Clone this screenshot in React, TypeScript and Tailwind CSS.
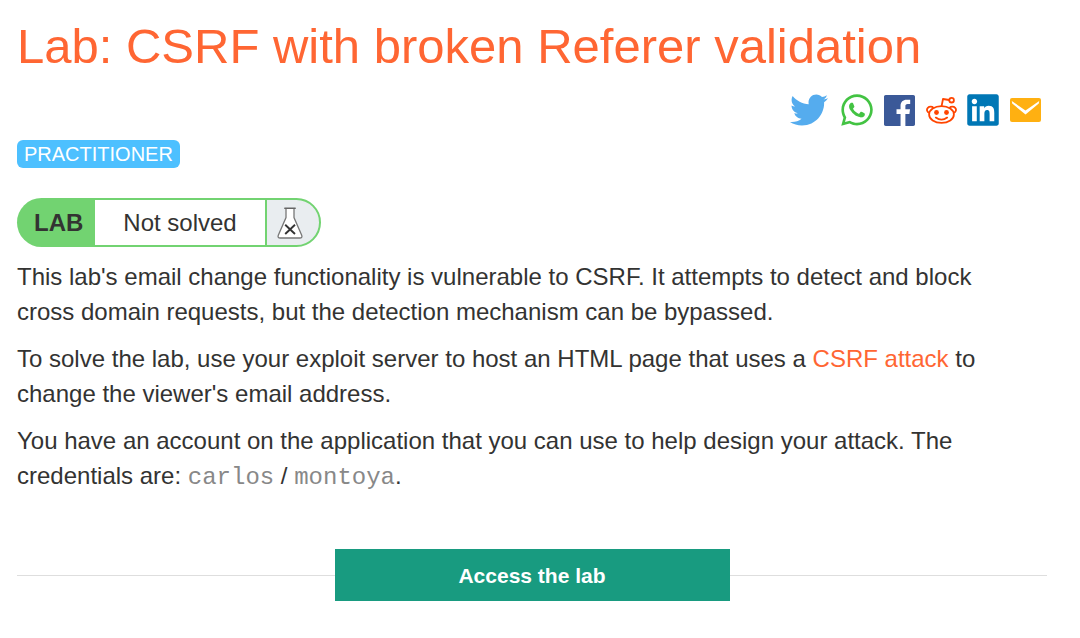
import { FaLinkedin, FaTwitter, FaWhatsapp } from "react-icons/fa";
import type { ReactNode } from "react";

function FacebookIcon() {
  return (
    <svg viewBox="0 0 24 24" className="size-[31px] shrink-0 text-[#3b5998]" fill="currentColor" aria-hidden="true">
      <path d="M22.676 0H1.324C.593 0 0 .593 0 1.324v21.352C0 23.408.593 24 1.324 24h11.494v-9.294H9.689v-3.621h3.129V8.41c0-3.099 1.894-4.785 4.659-4.785 1.325 0 2.464.097 2.796.141v3.24h-1.921c-1.5 0-1.792.721-1.792 1.771v2.311h3.584l-.465 3.63H16.56V24h6.115c.733 0 1.325-.592 1.325-1.324V1.324C24 .593 23.408 0 22.676 0" />
    </svg>
  );
}

function RedditIcon() {
  return (
    <svg viewBox="0 0 31 27" className="h-[27px] w-[31px] shrink-0" fill="none" stroke="#ff4500" strokeWidth="1.8" aria-hidden="true">
      <ellipse cx="15.5" cy="17.5" rx="12.4" ry="8.4" />
      <path d="M3.6 16C.9 15.2.3 12.4 1.8 10.8 3.3 9.2 6 9.2 7.6 10.8M27.4 16c2.7-.8 3.3-3.6 1.8-5.2-1.5-1.6-4.2-1.6-5.8 0" />
      <path d="M15.6 9.2l1.4-7.2 6.2 1" strokeLinejoin="round" />
      <circle cx="25.6" cy="3.2" r="2.3" />
      <path d="M9.8 20.6c3.4 2.5 8 2.5 11.4 0" strokeLinecap="round" />
      <circle cx="10.5" cy="15.5" r="2.4" fill="#ff4500" stroke="none" />
      <circle cx="20.5" cy="15.5" r="2.4" fill="#ff4500" stroke="none" />
    </svg>
  );
}

function MailIcon() {
  return (
    <svg viewBox="0 0 31 24" className="h-6 w-[31px] shrink-0" aria-hidden="true">
      <rect width="31" height="24" rx="2" fill="#ffb011" />
      <path d="M1.8 3 15.5 12.4 29.2 3 28.8 5.6 15.5 16.4 2.2 5.6Z" fill="#fff" />
    </svg>
  );
}

function FlaskIcon() {
  return (
    <svg viewBox="0 0 26 32" className="h-8 w-[26px]" aria-hidden="true">
      <path
        d="M9 1.6v8.9L1.3 28.2c-.7 1.8.1 2.8 1.9 2.8h19.6c1.8 0 2.6-1 1.9-2.8L17 10.5V1.6"
        fill="#fff"
        stroke="#777"
        strokeWidth="1.3"
      />
      <path d="M7.8 1.3h10.4" stroke="#666" strokeWidth="1.5" strokeLinecap="round" />
      <path d="M8.2 17.8l9.8 9.2M18 17.8l-9.8 9.2" stroke="#333" strokeWidth="1.9" />
    </svg>
  );
}

const shareLinks: { label: string; icon: ReactNode }[] = [
  { label: "Share on Twitter", icon: <FaTwitter className="size-[38px] shrink-0 text-[#55acee]" /> },
  { label: "Share on WhatsApp", icon: <FaWhatsapp className="size-9 shrink-0 text-[#43c343]" /> },
  { label: "Share on Facebook", icon: <FacebookIcon /> },
  { label: "Share on Reddit", icon: <RedditIcon /> },
  { label: "Share on LinkedIn", icon: <FaLinkedin className="size-9 shrink-0 text-[#0077b5]" /> },
  { label: "Share by email", icon: <MailIcon /> },
];

export default function App() {
  return (
    <main className="bg-white pt-[18px] pr-[33px] pb-9 pl-[17px] font-['Liberation_Sans',Arial,sans-serif] text-2xl leading-[35px] text-[#333332]">
      <h1 className="text-[49px] leading-14 text-[#ff6633]">Lab: CSRF with broken Referer validation</h1>

      <nav aria-label="Share" className="mt-[15px] mr-[6px] flex h-[42px] items-center justify-end gap-[10px]">
        {shareLinks.map(({ label, icon }) => (
          <a key={label} href="#share" aria-label={label} className="flex w-8 items-center justify-center first:mr-1.5">
            {icon}
          </a>
        ))}
      </nav>

      <div className="mt-[9px] flex">
        <span className="rounded-md bg-[#4dc0ff] px-[7px] text-xl leading-7 text-white">PRACTITIONER</span>
      </div>

      <div className="mt-[30px] flex h-[49px] w-fit">
        <strong className="flex items-center rounded-l-full bg-[#72d371] pr-3 pl-[17px]">LAB</strong>
        <span className="flex items-center border-y-2 border-[#72d371] px-7">Not solved</span>
        <span className="flex w-14 items-center rounded-r-full border-2 border-[#72d371] bg-[#e9edf0] pl-[10px]">
          <FlaskIcon />
        </span>
      </div>

      <div className="mt-3 flex flex-col gap-3 pr-5">
        <p>
          This lab's email change functionality is vulnerable to CSRF. It attempts to detect and block cross domain
          requests, but the detection mechanism can be bypassed.
        </p>
        <p>
          To solve the lab, use your exploit server to host an HTML page that uses a{" "}
          <a href="#csrf" className="text-[#ff6633]">CSRF attack</a> to change the viewer's email address.
        </p>
        <p>
          You have an account on the application that you can use to help design your attack. The credentials are:{" "}
          <code className="font-['Liberation_Mono','Courier_New',monospace] text-[#888]">carlos</code> /{" "}
          <code className="font-['Liberation_Mono','Courier_New',monospace] text-[#888]">montoya</code>.
        </p>
      </div>

      <div className="mt-[54px] flex items-center">
        <span className="h-px flex-1 bg-[#dedede]" />
        <button type="button" className="h-[52px] w-[395px] bg-[#189b80] text-[21px] font-bold text-white">
          Access the lab
        </button>
        <span className="h-px flex-1 bg-[#dedede]" />
      </div>
    </main>
  );
}
